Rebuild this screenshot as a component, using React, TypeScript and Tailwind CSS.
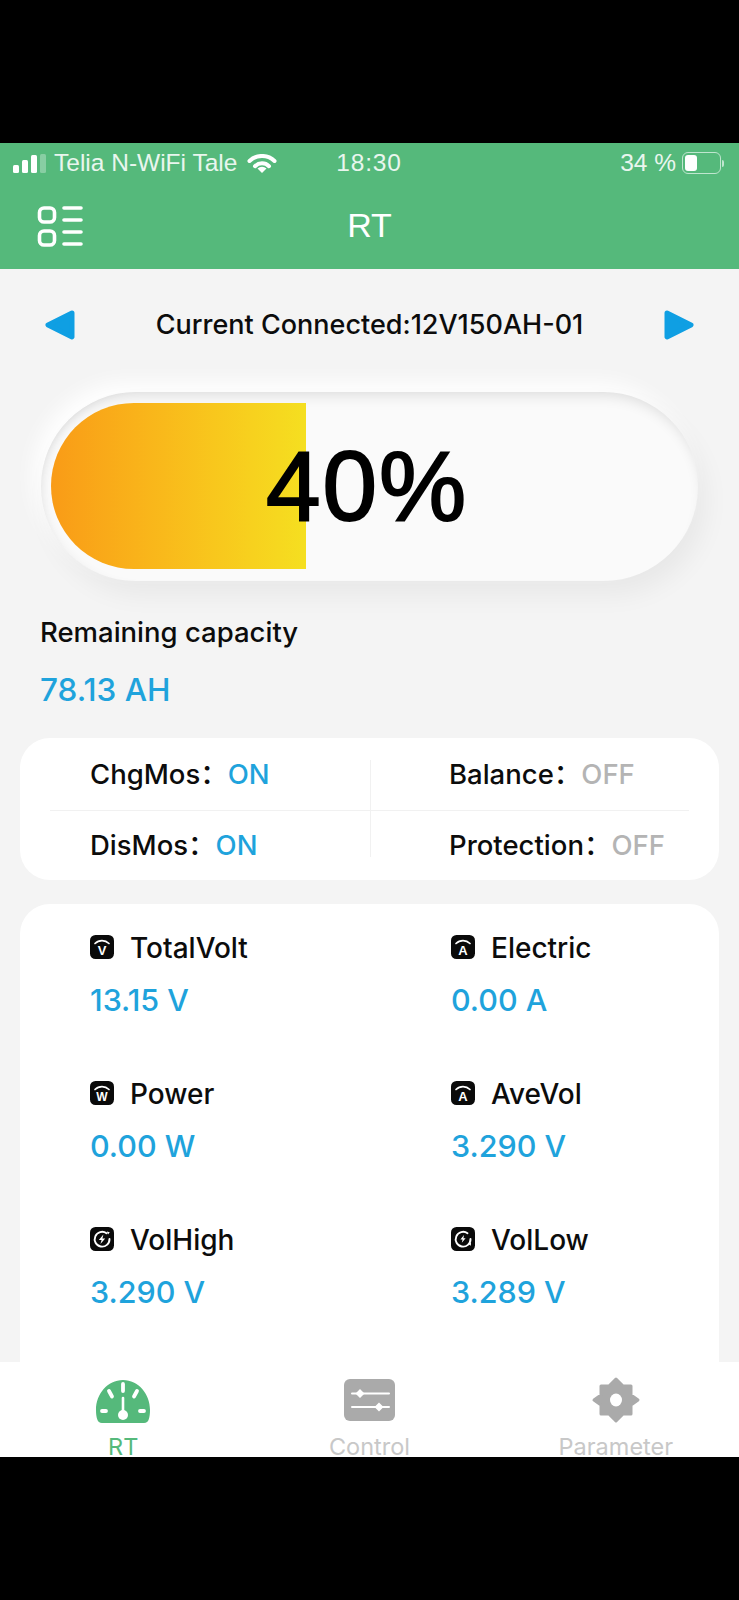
import React from 'react';

const metrics = [
  { label: 'TotalVolt', value: '13.15 V', glyph: 'V' },
  { label: 'Electric', value: '0.00 A', glyph: 'A' },
  { label: 'Power', value: '0.00 W', glyph: 'W' },
  { label: 'AveVol', value: '3.290 V', glyph: 'A' },
  { label: 'VolHigh', value: '3.290 V', glyph: 'high' },
  { label: 'VolLow', value: '3.289 V', glyph: 'low' },
];

function MetricIcon({ glyph }: { glyph: string }) {
  const isRing = glyph === 'high' || glyph === 'low';
  return (
    <svg width="24" height="24" viewBox="0 0 24 24" className="shrink-0">
      <rect width="24" height="24" rx="5.5" fill="#0a0a0a" />
      {isRing ? (
        <>
          <path d="M16.5 6.300A7.400 7.400 0 1 0 19.500 12" fill="none" stroke="#fff" strokeWidth="1.900" strokeLinecap="round" />
          {glyph === 'high' ? (
            <path d="M13.400 7.600 8.800 13h2.800l-1.200 4 4.800-5.600h-2.800zM16.800 4.600l3 .6-1.800 2.400z" fill="#fff" />
          ) : (
            <path d="M13 8 9.400 12.400h2.200l-.8 3.400 3.800-4.600h-2.200zM20 15.500l-.2 3.200-2.600-1.600z" fill="#fff" />
          )}
        </>
      ) : (
        <>
          <path d="M5 8.500a10 10 0 0 1 14 0" fill="none" stroke="#fff" strokeWidth="1.700" strokeLinecap="round" />
          <text x="12" y="19.500" textAnchor="middle" fontSize={glyph === 'W' ? 12 : 13} fontWeight="700" fill="#fff" fontFamily="Liberation Sans">
            {glyph}
          </text>
        </>
      )}
    </svg>
  );
}

function StatusRow({ label, value, on }: { label: string; value: string; on?: boolean }) {
  return (
    <div className="flex h-[71px] items-center text-[27.5px] font-medium text-[#0c0c0c]">
      <span>{label}：</span>
      <span className={on ? 'text-[#1fa3dc]' : 'text-[#b4b4b4]'}>{value}</span>
    </div>
  );
}

export default function App() {
  return (
    <div className="flex h-[1600px] w-[739px] flex-col bg-black [font-family:'Inter','Noto_Sans_CJK_SC',sans-serif]">
      <div className="h-[143px] shrink-0" />

      <div className="flex h-[1314px] shrink-0 flex-col bg-[#f4f4f4]">
        {/* Status bar */}
        <div className="flex h-[40px] shrink-0 items-center bg-[#55b97b] pl-[13px] pr-[15px] text-[24.5px] text-[#e9f6ee] [font-family:'Liberation_Sans',sans-serif]">
          <svg width="34" height="19" viewBox="0 0 34 19" className="shrink-0">
            <rect x="0" y="11" width="6" height="8" rx="1.5" fill="#fff" />
            <rect x="9" y="6" width="6" height="13" rx="1.5" fill="#fff" />
            <rect x="18" y="1" width="6" height="18" rx="1.5" fill="#fff" />
            <rect x="27" y="0" width="6" height="19" rx="1.5" fill="#fff" opacity="0.3" />
          </svg>
          <span className="ml-[7px]">Telia N-WiFi Tale</span>
          <svg width="30" height="19" viewBox="0 0 30 19" className="ml-[10px] shrink-0">
            <path d="M2.500 7a18 18 0 0 1 25 0" fill="none" stroke="#fff" strokeWidth="4" strokeLinecap="round" />
            <path d="M8 12.200a10 10 0 0 1 14 0" fill="none" stroke="#fff" strokeWidth="4" strokeLinecap="round" />
            <path d="M15 19 10.500 14.500a6.500 6.500 0 0 1 9 0z" fill="#fff" />
          </svg>
          <span className="ml-[59px] tracking-[0.8px]">18:30</span>
          <span className="ml-auto">34 %</span>
          <div className="ml-[6px] flex items-center">
            <div className="flex h-[22px] w-[39px] items-center rounded-[6px] border border-[#bfe6cf] p-[2px]">
              <div className="h-full w-[12px] rounded-[3px] bg-white" />
            </div>
            <div className="ml-[1px] h-[7px] w-[2px] rounded-r bg-[#bfe6cf]" />
          </div>
        </div>

        {/* Title bar */}
        <div className="relative flex h-[86px] shrink-0 items-center justify-center bg-[#55b97b] pb-[1px]">
          <svg width="46" height="41" viewBox="0 0 46 41" className="absolute left-[37px] top-[23px]">
            <rect x="2.500" y="2" width="15" height="14" rx="4.500" fill="none" stroke="#fff" strokeWidth="3.600" />
            <rect x="2.500" y="25" width="15" height="14" rx="4.500" fill="none" stroke="#fff" strokeWidth="3.600" />
            <path d="M27 2h17M27 14h17M27 26h17M27 38h17" stroke="#fff" strokeWidth="3.600" strokeLinecap="round" />
          </svg>
          <span className="text-[34px] text-white [font-family:'Liberation_Sans',sans-serif]">RT</span>
        </div>

        <div className="min-h-0 flex-1 overflow-hidden">
          <div className="flex h-[112px] items-center justify-between px-[45px]">
            <svg width="30" height="30" viewBox="0 0 30 30">
              <path d="M27 3 3 15 27 27z" fill="#0f9fe3" stroke="#0f9fe3" strokeWidth="5" strokeLinejoin="round" />
            </svg>
            <span className="text-[27px] font-medium text-[#0c0c0c]">Current Connected:12V150AH-01</span>
            <svg width="30" height="30" viewBox="0 0 30 30">
              <path d="M3 3 27 15 3 27z" fill="#0f9fe3" stroke="#0f9fe3" strokeWidth="5" strokeLinejoin="round" />
            </svg>
          </div>

          {/* Capacity pill */}
          <div className="relative mx-[41px] mt-[11px] h-[189px] rounded-full bg-[#fafafa] pl-[10px] pt-[11px] shadow-[inset_0_9px_14px_-6px_rgba(0,0,0,0.12),inset_8px_0_12px_-8px_rgba(0,0,0,0.07),8px_14px_26px_rgba(0,0,0,0.05),-8px_-10px_20px_rgba(255,255,255,0.95)]">
            <div className="h-[166px] w-[255px] rounded-l-[83px] bg-gradient-to-r from-[#f99b17] to-[#f5df20]" />
            <span className="absolute left-[225px] top-[38px] text-[98px] leading-[112px] tracking-[2px] text-black [-webkit-text-stroke:2px_black] [font-family:'Liberation_Sans',sans-serif]">40%</span>
          </div>

          <div className="ml-[40px] mt-[31px] h-[40px] text-[27.5px] font-medium leading-[40px] text-[#0c0c0c]">Remaining capacity</div>
          <div className="ml-[40px] mt-[18px] h-[40px] text-[31.5px] font-medium leading-[40px] text-[#1fa3dc]">78.13 AH</div>

          {/* Switch states */}
          <div className="relative mx-[20px] mt-[28px] grid h-[142px] grid-cols-[359px_1fr] rounded-[30px] bg-white pl-[70px] pt-[1px]">
            <StatusRow label="ChgMos" value="ON" on />
            <StatusRow label="Balance" value="OFF" />
            <StatusRow label="DisMos" value="ON" on />
            <StatusRow label="Protection" value="OFF" />
            <div className="absolute left-[30px] right-[30px] top-[72px] h-px bg-[#f1f1f1]" />
            <div className="absolute bottom-[23px] left-[350px] top-[22px] w-px bg-[#f1f1f1]" />
          </div>

          {/* Live values */}
          <div className="mx-[20px] mt-[24px] grid h-[520px] grid-cols-[361px_1fr] auto-rows-[146px] rounded-[30px] bg-white pl-[70px] pt-[31px]">
            {metrics.map(m => (
              <div key={m.label}>
                <div className="flex h-[24px] items-center gap-[16px] text-[28px] font-medium text-[#0c0c0c]">
                  <MetricIcon glyph={m.glyph} />
                  <span className="pt-[2px]">{m.label}</span>
                </div>
                <div className="mt-[24px] h-[34px] text-[30.5px] font-medium leading-[34px] text-[#1fa3dc]">{m.value}</div>
              </div>
            ))}
          </div>
        </div>

        {/* Tab bar */}
        <div className="grid h-[95px] shrink-0 grid-cols-3 bg-white">
          <div className="flex flex-col items-center pt-[18px]">
            <svg width="56" height="43" viewBox="0 0 56 43">
              <path d="M28 0C12.500 0 1 14 1 30c0 4 .4 7 1.300 9.500C3 41.500 4.500 43 7 43h42c2.500 0 4-1.500 4.700-3.500.9-2.500 1.300-5.500 1.300-9.500C55 14 43.500 0 28 0z" fill="#55b97b" />
              <path d="M28 4v7M14 11l3 5.500M42 11l-3 5.500M7 31h4M45 31h4" stroke="#fff" strokeWidth="3.800" strokeLinecap="round" />
              <path d="M28 18v15" stroke="#fff" strokeWidth="2.600" strokeLinecap="round" />
              <circle cx="28" cy="35" r="5" fill="#fff" />
            </svg>
            <span className="mt-[14px] text-[23.5px] leading-[20px] text-[#55b97b]">RT</span>
          </div>
          <div className="flex flex-col items-center pt-[17px]">
            <svg width="51" height="42" viewBox="0 0 51 42">
              <rect width="51" height="42" rx="6" fill="#aaaaaa" />
              <path d="M8 14.500h37M8 28h37" stroke="#fff" strokeWidth="2" strokeLinecap="round" />
              <path d="M16 10l4.500 4.500L16 19l-4.500-4.500zM35 23.500l4.500 4.500-4.500 4.500-4.500-4.500z" fill="#fff" />
            </svg>
            <span className="mt-[16px] text-[23.5px] leading-[20px] text-[#c8c8c8]">Control</span>
          </div>
          <div className="flex flex-col items-center pt-[14px]">
            <svg width="50" height="48" viewBox="0 0 50 48">
              <path d="M25 3l7 7h8v9l7 5-7 5v9h-8l-7 7-7-7h-8v-9l-7-5 7-5v-9h8z" fill="#aaaaaa" stroke="#aaaaaa" strokeWidth="3" strokeLinejoin="round" />
              <ellipse cx="25" cy="24" rx="6" ry="6.500" fill="#fff" />
            </svg>
            <span className="mt-[13px] text-[23.5px] leading-[20px] text-[#c8c8c8]">Parameter</span>
          </div>
        </div>
      </div>
    </div>
  );
}
